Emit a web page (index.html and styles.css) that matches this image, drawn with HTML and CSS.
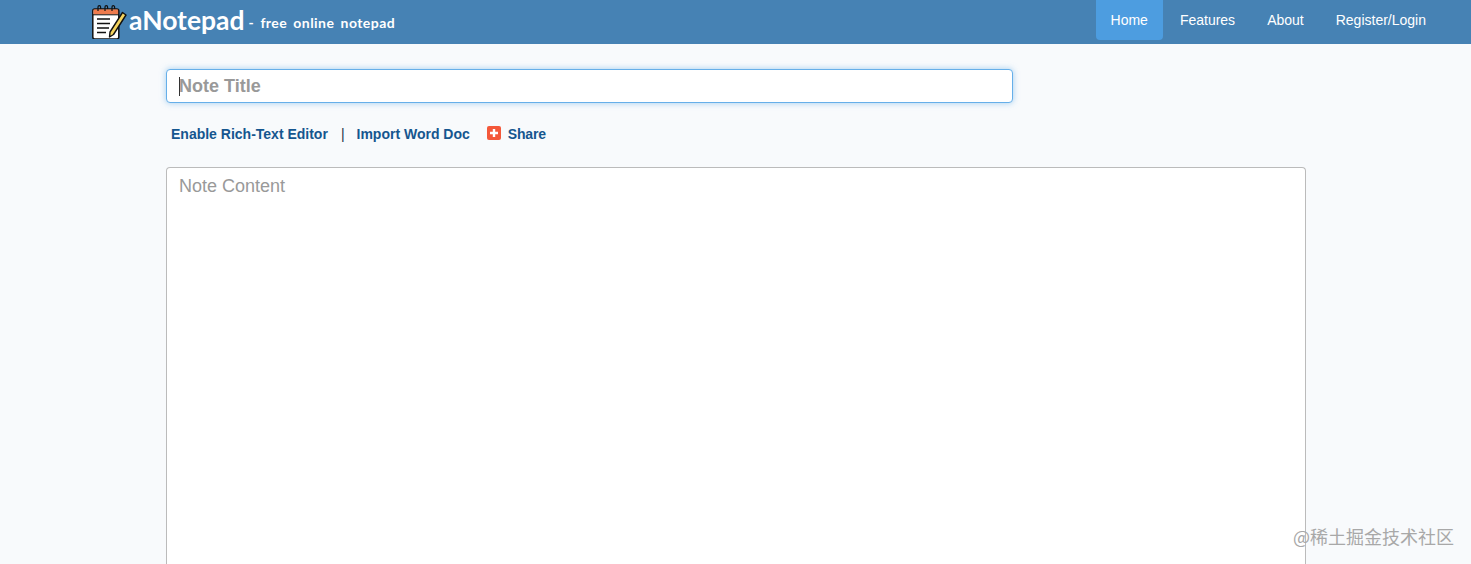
FILE: index.html
```html
<!DOCTYPE html>
<html lang='en'>
	<head>
		<meta charset='utf-8' />
		<title>aNotepad - free online notepad</title>
		<link rel="stylesheet" href="styles.css">
	</head>
	<body>
		<div class="navbar">
			<a class="brand" href="#">
				<svg class="brandIcon" width="36" height="36" viewBox="0 0 36 36">
					<rect x="1.8" y="6" width="26" height="30" rx="2" fill="#fff" stroke="#111" stroke-width="1.5" />
					<rect x="2.5" y="6.5" width="24.6" height="5" fill="#ee7b4d" />
					<path d="M2 11.8H27.5" stroke="#111" stroke-width="1" />
					<path d="M7 8V4a1.3 1.3 0 0 1 2.6 0V6M14 8V4a1.3 1.3 0 0 1 2.6 0V6M21 8V4a1.3 1.3 0 0 1 2.6 0V6" fill="none" stroke="#111" stroke-width="1.2" />
					<path d="M6 16H19M6 20.5H19M6 25H18M6 29.500H15" stroke="#111" stroke-width="1.5" />
					<path d="M31.500 9.500L35 12L22.500 31.500L18.500 34L19 29Z" fill="#f4d35e" stroke="#111" stroke-width="1.4" stroke-linejoin="round" />
				</svg>
				<span class="brandName">aNotepad</span>
				<span class="brandTag">- free online notepad</span>
			</a>
			<ul class="navLinks">
				<li><a class="navLink active" href="#">Home</a></li>
				<li><a class="navLink" href="#">Features</a></li>
				<li><a class="navLink" href="#">About</a></li>
				<li><a class="navLink" href="#">Register/Login</a></li>
			</ul>
		</div>
		<div id="divContent">
			<div class="titleWrap">
				<input id="inputTitle" type="text" placeholder="Note Title" />
				<span class="caret"></span>
			</div>
			<div class="toolbar">
				<a href="#">Enable Rich-Text Editor</a>
				<span class="sep">|</span>
				<a href="#">Import Word Doc</a>
				<a class="share" href="#">
					<svg width="14" height="14" viewBox="0 0 14 14">
						<rect width="14" height="14" rx="2" fill="#f4583a" />
						<path d="M7 3V11M3 7H11" stroke="#fff" stroke-width="2.4" />
					</svg>
					Share
				</a>
			</div>
			<textarea id="inputContent" placeholder="Note Content"></textarea>
		</div>
		<div class="watermark">@稀土掘金技术社区</div>
	</body>
</html>
```

FILE: styles.css
```css
html {
	overflow: hidden;
}
body {
	margin: 0px;
	height: 564px;
	overflow: hidden;
	background: #f8fafc;
	font-family: "Liberation Sans", Arial, sans-serif;
}
a {
	text-decoration: none;
}
.navbar {
	height: 44px;
	padding: 0 30px 0 91px;
	display: flex;
	flex-direction: row;
	justify-content: space-between;
	background: #4682b4;
}
.brand {
	display: flex;
	flex-direction: row;
	align-items: center;
	color: #fff;
}
.brandIcon {
	margin-top: -2px;
}
.brandName {
	margin-left: 2px;
	margin-bottom: 4px;
	font-family: "Lato", sans-serif;
	font-size: 26.5px;
	font-weight: bold;
}
.brandTag {
	margin-left: 4px;
	font-family: "Lato", sans-serif;
	font-size: 14px;
	font-weight: bold;
	letter-spacing: 0.45px;
	word-spacing: 2.3px;
}
.navLinks {
	margin: 0;
	padding: 0;
	list-style: none;
	display: flex;
	flex-direction: row;
	gap: 2px;
}
.navLink {
	display: block;
	height: 40px;
	padding: 0 15px;
	line-height: 40px;
	font-size: 14px;
	color: #fff;
	border-radius: 0 0 4px 4px;
}
.navLink.active {
	background: #4d9de0;
}
#divContent {
	padding: 25px 0 0 166px;
	display: flex;
	flex-direction: column;
	align-items: flex-start;
}
.titleWrap {
	position: relative;
}
#inputTitle {
	display: block;
	box-sizing: border-box;
	width: 847px;
	height: 34px;
	padding: 0 12px;
	font-family: inherit;
	font-size: 18px;
	font-weight: bold;
	background: #fff;
	border: 1px solid #66afe9;
	border-radius: 4px;
	box-shadow: 0 0 6px rgba(102, 175, 233, 0.6);
	outline: none;
}
#inputTitle::placeholder {
	color: #999;
	opacity: 1;
}
.caret {
	position: absolute;
	left: 13px;
	top: 8px;
	width: 1px;
	height: 19px;
	background: #333;
}
.toolbar {
	height: 16px;
	margin: 23px 0 25px 5px;
	display: flex;
	flex-direction: row;
	align-items: center;
	font-size: 14px;
	font-weight: bold;
	line-height: 16px;
}
.toolbar a {
	color: #15568f;
}
.sep {
	margin: 0 12px 0 13px;
	font-weight: normal;
	color: #1c2f45;
}
.toolbar a.share {
	margin-left: 17px;
	display: flex;
	flex-direction: row;
	align-items: center;
	gap: 7px;
	letter-spacing: -0.2px;
}
.share svg {
	margin-top: -2px;
}
#inputContent {
	display: block;
	box-sizing: border-box;
	width: 1140px;
	height: 397px;
	padding: 7px 12px;
	font-family: inherit;
	font-size: 18px;
	line-height: 22px;
	background: #fff;
	border: 1px solid #bbb;
	border-bottom: none;
	border-radius: 4px 4px 0 0;
	outline: none;
	resize: none;
}
#inputContent::placeholder {
	color: #999;
	opacity: 1;
}
.watermark {
	position: absolute;
	right: 17px;
	top: 524px;
	font-family: "Noto Sans CJK SC", sans-serif;
	font-size: 18px;
	line-height: 24px;
	color: #a8a8a8;
}
```
